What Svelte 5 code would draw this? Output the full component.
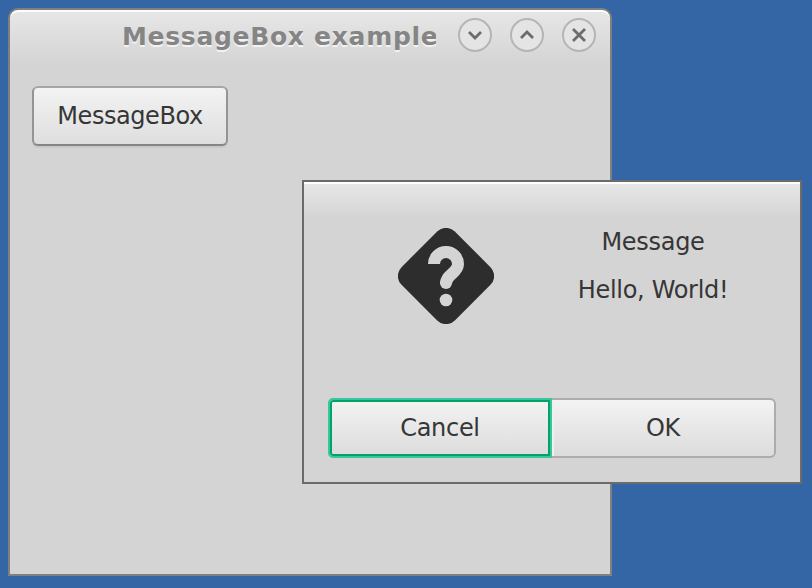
<script>
  const controls = [
    { label: 'Minimize', path: 'M11 14L17 20L23 14' },
    { label: 'Maximize', path: 'M11 20L17 14L23 20' },
    { label: 'Close', path: 'M11 11L23 23M23 11L11 23' }
  ];
</script>

<main class="desktop">
  <section class="window">
    <header class="titlebar">
      <h1>MessageBox example</h1>
      <div class="controls">
        {#each controls as control}
          <button class="control" aria-label={control.label}>
            <svg width="34" height="34" viewBox="0 0 34 34" fill="none">
              <circle cx="17" cy="17" r="16" fill="#e4e4e4" stroke="#b5b5b5" stroke-width="2" />
              <path d={control.path} stroke="#6b6b6b" stroke-width="2.8" />
            </svg>
          </button>
        {/each}
      </div>
    </header>
    <div class="content">
      <button class="launch"><span>MessageBox</span></button>
    </div>
  </section>

  <div class="dialog" role="dialog" aria-label="Message">
    <div class="body">
      <div class="icon">
        <svg width="96" height="96" viewBox="0 0 96 96">
          <rect x="10.3" y="10.3" width="75.4" height="75.4" rx="12.5" fill="#2d2d2d" transform="rotate(45 48 48)" />
          <path fill="none" stroke="#d4d4d4" stroke-width="12" d="M36 36A12 12 0 0 1 60 36C60 45 48 46 48 56" />
          <circle cx="48" cy="55" r="6" fill="#d4d4d4" />
          <circle cx="48" cy="72" r="6.3" fill="#d4d4d4" />
        </svg>
      </div>
      <div class="message">
        <p class="heading">Message</p>
        <p class="greeting">Hello, World!</p>
      </div>
    </div>
    <div class="actions">
      <button class="cancel"><span>Cancel</span></button>
      <button class="ok"><span>OK</span></button>
    </div>
  </div>
</main>

<style>
  * { box-sizing: border-box; }
  .desktop {
    position: relative;
    width: 812px;
    height: 588px;
    padding: 8px;
    overflow: hidden;
    background: #3465a4;
    color: #363636;
    font: 24px/32px "DejaVu Sans", sans-serif;
    letter-spacing: -0.3px;
  }
  h1, p { margin: 0; }
  button {
    margin: 0;
    padding: 0;
    color: inherit;
    font: inherit;
    letter-spacing: inherit;
  }
  .window {
    width: 604px;
    height: 568px;
    border: 2px solid #808080;
    border-radius: 10px 10px 0 0;
    background: linear-gradient(#e7e7e7, #d4d4d4 54px);
    overflow: hidden;
    box-shadow: inset 0 2px #fff;
  }
  .titlebar {
    display: flex;
    height: 54px;
    padding-left: 112px;
  }
  h1 {
    width: 314px;
    padding-top: 11px;
    overflow: hidden;
    white-space: nowrap;
    color: #858585;
    font-size: 25px;
    line-height: 32px;
    letter-spacing: 0.7px;
    text-shadow: 0 2px #f2f2f2;
  }
  .controls {
    display: flex;
    gap: 18px;
    margin-left: 22px;
    padding-top: 8px;
  }
  .control {
    width: 34px;
    height: 34px;
    border: 0;
    background: none;
  }
  .control svg, .icon svg { display: block; }
  .content { padding: 22px; }
  .launch {
    width: 196px;
    height: 60px;
    border: 2px solid #a0a0a0;
    border-color: #a6a6a6 #949494 #858585;
    border-radius: 6px;
    background: linear-gradient(#f3f3f3, #dedede);
    box-shadow: 0 2px #c8c8c8;
    letter-spacing: -0.45px;
  }
  .dialog {
    position: absolute;
    left: 302px;
    top: 180px;
    width: 500px;
    height: 304px;
    border: 2px solid #6b6b6b;
    background: linear-gradient(#e8e8e8, #d4d4d4 36px);
    box-shadow: inset 0 2px #fff;
  }
  .body {
    display: flex;
    height: 216px;
    padding: 46px 0 0 94px;
  }
  .message {
    width: 200px;
    margin-left: 59px;
    text-align: center;
  }
  .heading { margin-top: -2px; }
  .greeting { margin-top: 16px; }
  .actions {
    display: flex;
    padding-left: 24px;
  }
  .actions button {
    height: 60px;
    background: linear-gradient(#f3f3f3, #dcdcdc);
  }
  .actions .cancel {
    width: 224px;
    border: 2px solid #3ac5a0;
    border-radius: 5px 0 0 5px;
    box-shadow: inset 0 0 0 2px #00a566;
  }
  .actions .ok {
    width: 224px;
    border: 2px solid #acacac;
    border-left: 0;
    border-radius: 0 6px 6px 0;
    box-shadow: inset 2px 0 #f0f0f0;
  }
</style>
